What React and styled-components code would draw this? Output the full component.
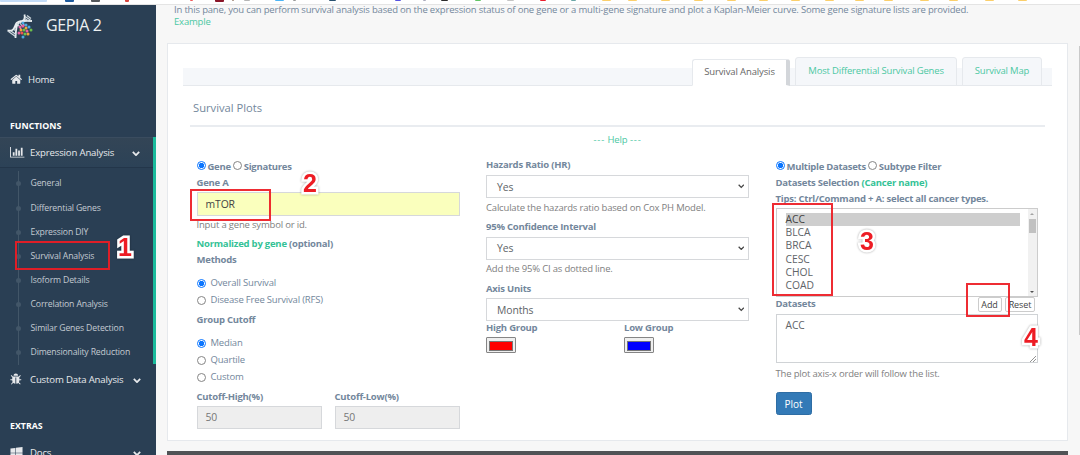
import React from 'react';
import styled, { createGlobalStyle, css } from 'styled-components';

const Global = createGlobalStyle`
  * { box-sizing: border-box; }
  body { margin: 0; background: #f7f7f7; overflow: hidden; }
  #root { font-family: "Open Sans", "Noto Sans", sans-serif; font-size: 9.5px; color: #73879c; }
`;

const Page = styled.div`
  position: relative; width: 1080px; height: 455px; overflow: hidden;
  display: flex; flex-direction: column; background: #f7f7f7;
`;

/* bookmark strip */
const Bookmarks = styled.div`
  flex: none; height: 5px; display: flex; align-items: flex-start; background: #fff;
  border-bottom: 1px solid #e4e4e4;
`;
const Mark = styled.i`
  flex: none; width: ${p => p.$w}px; height: ${p => p.$h || 1}px; margin-left: ${p => p.$gap}px;
  background: ${p => p.$c}; border-radius: 0 0 1px 1px;
`;
const marks = [
  [0, 47, '#c3dcf8', 2], [65, 9, '#1e5a9c', 2], [91, 9, '#55585c', 2], [125, 4, '#d8433c', 2], [190, 3, '#ee5a5a'],
  [215, 9, '#8a1528', 2], [232, 2, '#9b8070'], [244, 6, '#b5b5b5'], [275, 9, '#4cb4f5'], [293, 3, '#999'],
  [329, 7, '#28506e'], [395, 6, '#5552e0'], [423, 3, '#aab'], [441, 7, '#2a2a2a'], [475, 6, '#62c464'],
  [507, 7, '#c4c4c4'], [540, 6, '#ea1d2c'], [571, 5, '#6ba6a6'],
  ...[602, 628, 661, 694, 727, 759, 791, 825, 855, 884, 920, 949, 985, 1018].map(x => [x, 9, '#fbcf6b']),
];

const Body = styled.div`flex: 1; display: flex; min-height: 0;`;

/* sidebar */
const Sidebar = styled.aside`
  flex: none; width: 156px; background: #2a3f54; color: #e7e9ec; overflow: hidden;
`;
const Brand = styled.div`
  height: 50px; padding: 8px 0 0 6px; display: flex; align-items: flex-start; gap: 12px;
  font-size: 16px; line-height: 25px; color: #ecf0f1;
`;
const BrandName = styled.span`margin-left: 1px; letter-spacing: -.35px;`;
const NavRow = styled.div`
  height: ${p => p.$h}px; display: flex; align-items: center; padding-left: 10px;
  font-size: 9.6px; white-space: nowrap; letter-spacing: -.16px;
  ${p => p.$active && css`
    background: linear-gradient(#334556, #2c4257); border-bottom: 1px solid #23364a;
    border-top: 1px solid #3a4c5f;
  `}
`;
const IconSlot = styled.span`width: ${p => p.$w || 20}px; display: flex; flex: none; svg { display: block; }`;
const Caret = styled.span`margin-left: auto; margin-right: ${p => p.$r}px; display: flex; padding-top: ${p => p.$pt || 0}px;`;
const Heading = styled.div`
  height: ${p => p.$h}px; padding-left: 10px; padding-top: ${p => p.$pt}px;
  font-weight: 700; font-size: 8.8px; line-height: 12px; color: #fff;
`;
const ActiveGroup = styled.div`border-right: 3px solid #1abb9c; height: 227px;`;
const SubList = styled.div`padding-top: 3.4px;`;
const SubItem = styled.div`
  height: 24.15px; display: flex; align-items: center; padding-left: 18px; position: relative;
  font-size: 8.7px; color: #c3cad2; white-space: nowrap; letter-spacing: -.16px;
  &::before { content: ''; position: absolute; left: 18px; top: 0; bottom: 0; width: 1px; background: #425668; }
`;
const Dot = styled.i`
  width: 5px; height: 5px; border-radius: 50%; background: #425668; margin: 1px 9.5px 0 -2px; flex: none;
`;

/* main */
const Main = styled.main`flex: 1; padding: 0 11px; display: flex; flex-direction: column; min-width: 0;`;
const Intro = styled.div`
  height: 39.5px; padding: 0 0 0 7px; line-height: 12.5px; white-space: nowrap; margin-top: -1.5px; flex: none;
  letter-spacing: -.178px;
`;
const T = styled.span`color: ${p => p.$c || 'inherit'}; white-space: nowrap;`;
const Card = styled.section`
  flex: none; height: 398px; background: #fff; border: 1px solid #e6e9ed; padding: 12px 15px 0;
  width: 901px;
`;
const Tabs = styled.div`
  height: 30px; display: flex; justify-content: flex-end; align-items: flex-end; padding-right: 10px;
  background: linear-gradient(#fff 0 12px, #f5f7fa 12px); border-bottom: 1px solid #e6e9ed;
`;
const Tab = styled.div`
  width: ${p => p.$w}px; height: ${p => (p.$on ? 27 : 29)}px; margin-right: ${p => p.$mr || 0}px;
  margin-bottom: -1px; border: 1px solid #e6e9ed; border-radius: 3px 3px 0 0;
  display: flex; align-items: center; justify-content: center; padding-bottom: 2px;
  color: #4cc8a3; background: #f5f7fa; white-space: nowrap; letter-spacing: -.19px;
  ${p => p.$on && css`
    background: #fff; color: #666; border-right: 4px solid #d3d6da; border-bottom-color: #fff; letter-spacing: -.12px;
  `}
`;
const Title = styled.h2`
  margin: 0 7px; height: 41px; padding: 14px 0 0 3px; border-bottom: 2px solid #e9ecf0; font-weight: 400;
  font-size: 11.2px; line-height: 16px;
`;
const Help = styled.div`
  height: 28px; padding-top: 6px; line-height: 14px; text-align: center; color: #4cc8a3; letter-spacing: -.1px;
`;
const Dashes = styled.span`letter-spacing: .8px;`;
const Columns = styled.div`
  display: grid; grid-template-columns: 263px 263px 262px; column-gap: 26.5px; padding-left: 13.5px;
`;
const Col = styled.div`display: flex; flex-direction: column; min-width: 0; padding-top: ${p => p.$pt || 0}px;`;

const Line = styled.div`
  height: ${p => p.$h}px; display: flex; align-items: center; flex: none; white-space: nowrap;
  font-weight: ${p => (p.$b ? 700 : 400)}; letter-spacing: ${p => (p.$b ? -0.22 : -0.18)}px;
  color: ${p => p.$c || '#73879c'}; margin-bottom: ${p => p.$mb || 0}px; margin-top: ${p => p.$mt || 0}px;
`;
const RadioLine = styled(Line)`height: 16px; font-weight: 700; letter-spacing: -.27px;`;
const Radio = styled.i`
  width: 9px; height: 9px; border-radius: 50%; flex: none;
  margin: ${p => p.$mt || 0}px ${p => p.$mr || 5}px 0 ${p => p.$ml || 0}px;
  border: 1px solid ${p => (p.$on ? '#0a75ff' : '#858585')};
  background: ${p => (p.$on ? 'radial-gradient(#0a75ff 0 2.4px, #fff 3px)' : '#fff')};
`;
const Field = styled.div`
  height: ${p => p.$h || 23}px; width: 100%; flex: none;
  border: 1px solid #d6d8db; background: ${p => p.$bg || '#fff'}; color: ${p => p.$c || '#606468'};
  display: flex; align-items: center; padding: 0 6px 0 ${p => p.$pl || 8}px; font-size: 10.4px; letter-spacing: -.1px;
`;
const Pair = styled.div`display: grid; grid-template-columns: 125px 125px; column-gap: 13px; align-items: start;`;
const Swatch = styled.div`
  width: 30px; height: 16px; border: 1px solid #858585; border-radius: 1px; background: #efefef; padding: 3px 2px;
  &::before { content: ''; display: block; height: 8px; border: 1px solid #777; background: ${p => p.$c}; }
`;
const ListBox = styled.div`height: 89px; border: 1px solid #ccc; display: flex; flex: none; width: 262px; margin-top: 1.5px;`;
const Options = styled.div`flex: 1; padding: 4px 8px 0 9px; overflow: hidden;`;
const Option = styled.div`
  height: 13.2px; line-height: 13px; font-size: 10.3px; color: #606468;
  ${p => p.$on && css`background: #cecece; color: #444;`}
`;
const Scroll = styled.div`
  width: 9px; background: #f1f1f1; display: flex; flex-direction: column; align-items: center; justify-content: space-between;
`;
const Thumb = styled.i`width: 7px; height: 14px; background: #c1c1c1; margin-bottom: auto; margin-top: 1px;`;
const Arrow = styled.i`
  width: 0; height: 0; border: 2px solid transparent; margin: 3px 0;
  ${p => (p.$up ? css`border-bottom-color: #a3a3a3; margin-top: 2px;` : css`border-top-color: #505050; margin-bottom: 1px;`)}
`;
const SmallButton = styled.button`
  height: 15px; width: ${p => p.$w}px; border: 1px solid #ccc; border-radius: 2px; background: #fff; color: #444;
  font: 400 9px "Open Sans", sans-serif; padding: 0; margin-right: 3.5px; letter-spacing: -.1px;
`;
const TextArea = styled.div`
  height: 49px; border: 1px solid #d0d3d6; padding: 4px 1px 0 9px; font-size: 10.2px; line-height: 13px; color: #606468;
  display: flex; justify-content: space-between; flex: none;
  svg { align-self: flex-end; display: block; }
`;
const Plot = styled.button`
  width: 36px; height: 23px; border: 1px solid #2e6da4; border-radius: 2.5px; background: #337ab7; color: #fff;
  font: 400 10px "Open Sans", sans-serif; padding: 0;
`;
const Footer = styled.footer`margin-top: 10px; height: 10px; width: 901px; background: #505356; flex: none;`;

/* annotations that lie over the page */
const RedBox = styled.div`
  position: absolute; left: ${p => p.$x}px; top: ${p => p.$y}px; width: ${p => p.$w}px; height: ${p => p.$h}px;
  border: 2px solid #ed1c24; opacity: .93;
`;
const Num = styled.div`
  position: absolute; left: ${p => p.$x}px; top: ${p => p.$y}px; font: 700 25px/26px "Liberation Sans", sans-serif;
  color: #ed1c24; -webkit-text-stroke: 5px #fff; paint-order: stroke fill; stroke-linejoin: round;
  filter: drop-shadow(0 0 1px rgba(0,0,0,.35));
`;
const PageScroll = styled.div`position: absolute; right: 0; top: 46px; width: 1px; height: 289px; background: #c9c9c9;`;

const icons = {
  home: ['0 0 1792 1792', 'M1472 992v480q0 26-19 45t-45 19h-384v-384h-256v384h-384q-26 0-45-19t-19-45v-480q0-1 .5-3t.5-3l575-474 575 474q1 2 1 6zm223-69l-62 74q-8 9-21 11h-3q-13 0-21-7l-692-577-692 577q-12 8-24 7-13-2-21-11l-62-74q-8-10-7-23.5t11-21.5l719-599q32-26 76-26t76 26l244 204v-195q0-14 9-23t23-9h192q14 0 23 9t9 23v408l219 182q10 8 11 21.5t-7 23.5z'],
  chart: ['0 0 2048 1792', 'M640 896v512h-256v-512h256zm384-512v1024h-256v-1024h256zm1024 1152v128h-2048v-1536h128v1408h1920zm-640-896v768h-256v-768h256zm384-384v1152h-256v-1152h256z'],
  bug: ['0 0 1792 1792', 'M1632 960q0 26-19 45t-45 19h-224q0 171-67 290l208 209q19 19 19 45t-19 45q-18 19-45 19t-45-19l-198-197q-5 5-15 13t-42 28.5-65 36.5-82 29-97 13v-896h-128v896q-51 0-101.5-13.5t-87-33-66-39-43.5-32.5l-15-14-183 207q-20 21-48 21-24 0-43-16-19-18-20.5-44.5t15.5-46.5l202-227q-58-114-58-274h-224q-26 0-45-19t-19-45 19-45 45-19h224v-294l-173-173q-19-19-19-45t19-45 45-19 45 19l173 173h844l173-173q19-19 45-19t45 19 19 45-19 45l-173 173v294h224q26 0 45 19t19 45zm-480-576h-640q0-133 93.5-226.5t226.5-93.5 226.5 93.5 93.5 226.5z'],
  windows: ['0 0 1792 1792', 'M746 1006v651l-682-94v-557h682zm0-743v659h-682v-565zm982 743v786l-907-125v-661h907zm0-878v794h-907v-669z'],
};
const Icon = ({ name, w, h }) => (
  <svg width={w} height={h} viewBox={icons[name][0]} fill="#e7e9ec"><path d={icons[name][1]} /></svg>
);
const Chevron = ({ c = '#e7e9ec', w = 8, sw = 2.2 }) => (
  <svg width={w} height={w * 0.7} viewBox="0 0 10 7" fill="none" stroke={c} strokeWidth={sw}><path d="M1 1.2l4 4 4-4" /></svg>
);
const Logo = () => (
  <svg width="27" height="26" viewBox="0 0 27 26" fill="none">
    <path d="M1.500 17.500C8 19 8.500 14 10 11S16 7.500 26 8M18.500 1.500C20 8 16 8 13 9.500S10 17 9.500 25" stroke="#e8edf0" strokeWidth="1.800" />
    <path d="M2.500 18.500l7 5M5 18l5 3.500M8 16.500l2 1.500M11 10l4 6M13 9l4 5M15.500 8.500l3 4M19 3.500l6 4M18.500 5.500l5 3M21 2.500l4 3" stroke="#cfd8de" strokeWidth="1.200" />
    {[[17, 10, '#4aa8e0'], [20, 12, '#4aa8e0'], [14, 14, '#e85fa0'], [17, 13, '#e85fa0'], [20, 15, '#f2a33a'], [23, 14, '#4aa8e0'],
      [15, 17, '#f2a33a'], [18, 17, '#6cc04a'], [21, 18, '#e85fa0'], [25, 17, '#6cc04a'], [13, 20, '#e85fa0'], [16, 20, '#f0524f'],
      [19, 21, '#6cc04a'], [22, 21, '#f2a33a'], [17, 24, '#4aa8e0']].map(([x, y, c], i) => (
      <circle key={i} cx={x} cy={y} r="1.500" fill={c} />
    ))}
  </svg>
);

const subItems = ['General', 'Differential Genes', 'Expression DIY', 'Survival Analysis', 'Isoform Details',
  'Correlation Analysis', 'Similar Genes Detection', 'Dimensionality Reduction'];

const Select = ({ children }) => (
  <Field $pl={10}><span>{children}</span><Caret $r={-2}><Chevron c="#444" w={6.5} sw={1.9} /></Caret></Field>
);

export default function App() {
  return (
    <Page>
      <Global />
      <Bookmarks>
        {marks.map(([x, w, c, h], i) => (
          <Mark key={x} $w={w} $c={c} $h={h} $gap={i ? x - marks[i - 1][0] - marks[i - 1][1] : 0} />
        ))}
      </Bookmarks>
      <Body>
        <Sidebar>
          <Brand><Logo /><BrandName>GEPIA 2</BrandName></Brand>
          <NavRow $h={48}><IconSlot $w={18}><Icon name="home" w={12.5} h={12.5} /></IconSlot>Home</NavRow>
          <Heading $h={34} $pt={17}>FUNCTIONS</Heading>
          <ActiveGroup>
            <NavRow $h={31} $active><IconSlot><Icon name="chart" w={14.5} h={12.5} /></IconSlot>Expression Analysis<Caret $r={13} $pt={2}><Chevron /></Caret></NavRow>
            <SubList>{subItems.map(s => <SubItem key={s}><Dot />{s}</SubItem>)}</SubList>
          </ActiveGroup>
          <NavRow $h={31}><IconSlot><Icon name="bug" w={12.5} h={12.5} /></IconSlot>Custom Data Analysis<Caret $r={15} $pt={2}><Chevron /></Caret></NavRow>
          <Heading $h={42} $pt={25}>EXTRAS</Heading>
          <NavRow $h={31}><IconSlot><Icon name="windows" w={13} h={13} /></IconSlot>Docs<Caret $r={15} $pt={2}><Chevron /></Caret></NavRow>
        </Sidebar>
        <Main>
          <Intro>
            <T>In this pane, you can perform survival analysis based on the expression status of one gene or a multi-gene signature and plot a Kaplan-Meier curve. Some gene signature lists are provided.</T><br />
            <T $c="#4cc8a3">Example</T>
          </Intro>
          <Card>
            <Tabs>
              <Tab $on $w={98} $mr={5}>Survival Analysis</Tab>
              <Tab $w={162} $mr={5}>Most Differential Survival Genes</Tab>
              <Tab $w={80}>Survival Map</Tab>
            </Tabs>
            <Title>Survival Plots</Title>
            <Help><Dashes>---</Dashes> Help <Dashes>---</Dashes></Help>
            <Columns>
              <Col $pt={3.5}>
                <RadioLine><Radio $on $mr={2} $mt={-2} />Gene<Radio $ml={2} $mr={2} $mt={-2} />Signatures</RadioLine>
                <Line $h={16} $b $mb={1.5}>Gene A</Line>
                <Field $h={23.5} $bg="#faffbd" $c="#444" $pl={8}>mTOR</Field>
                <Line $h={18} $c="#808080">Input a gene symbol or id.</Line>
                <Line $h={19} $b><T $c="#34c296">Normalized by gene</T>&nbsp;(optional)</Line>
                <Line $h={14} $b $mb={7.5}>Methods</Line>
                <Line $h={17}><Radio $on $mt={1} />Overall Survival</Line>
                <Line $h={17}><Radio $mt={1} />Disease Free Survival (RFS)</Line>
                <Line $h={17} $b $mt={3} $mb={6}>Group Cutoff</Line>
                <Line $h={17}><Radio $on $mt={1} />Median</Line>
                <Line $h={17}><Radio $mt={1} />Quartile</Line>
                <Line $h={17}><Radio $mt={1} />Custom</Line>
                <Pair>
                  <div><Line $h={18} $mt={2.5} $b>Cutoff-High(%)</Line><Field $h={23.5} $bg="#eee" $c="#777">50</Field></div>
                  <div><Line $h={18} $mt={2.5} $b>Cutoff-Low(%)</Line><Field $h={23.5} $bg="#eee" $c="#777">50</Field></div>
                </Pair>
              </Col>
              <Col $pt={1}>
                <Line $h={17.5} $mb={1.5} $b>Hazards Ratio (HR)</Line>
                <Select>Yes</Select>
                <Line $h={18.5} $c="#808080">Calculate the hazards ratio based on Cox PH Model.</Line>
                <Line $h={20} $b>95% Confidence Interval</Line>
                <Select>Yes</Select>
                <Line $h={18.5} $c="#808080">Add the 95% CI as dotted line.</Line>
                <Line $h={20} $b>Axis Units</Line>
                <Select>Months</Select>
                <Pair>
                  <div><Line $h={13} $mb={3} $b>High Group</Line><Swatch $c="#f00" /></div>
                  <div><Line $h={13} $mb={3} $b>Low Group</Line><Swatch $c="#00f" /></div>
                </Pair>
              </Col>
              <Col $pt={3.5}>
                <RadioLine><Radio $on $mr={2} $mt={-2} />Multiple Datasets<Radio $ml={2} $mr={2} $mt={-2} />Subtype Filter</RadioLine>
                <Line $h={16} $b>Datasets Selection&nbsp;<T $c="#34c296">(Cancer name)</T></Line>
                <Line $h={16} $b>Tips: Ctrl/Command + A: select all cancer types.</Line>
                <ListBox>
                  <Options>{['ACC', 'BLCA', 'BRCA', 'CESC', 'CHOL', 'COAD'].map((o, i) => <Option key={o} $on={i === 0}>{o}</Option>)}</Options>
                  <Scroll><Arrow $up /><Thumb /><Arrow /></Scroll>
                </ListBox>
                <Line $h={12} $mb={5} $b>
                  <T>Datasets</T>
                  <Caret $r={-1} $pt={2.5}><SmallButton $w={24}>Add</SmallButton><SmallButton $w={30}>Reset</SmallButton></Caret>
                </Line>
                <TextArea>ACC<svg width="6" height="6" viewBox="0 0 6 6" stroke="#777" strokeWidth=".8"><path d="M0 6L6 0M3 6l3-3" /></svg></TextArea>
                <Line $h={20} $c="#808080">The plot axis-x order will follow the list.</Line>
                <Line $h={41}><Plot>Plot</Plot></Line>
              </Col>
            </Columns>
          </Card>
          <Footer />
        </Main>
      </Body>
      <RedBox $x={15} $y={241} $w={95} $h={29} />
      <RedBox $x={190} $y={189} $w={81} $h={32} />
      <RedBox $x={772} $y={203} $w={61} $h={93} />
      <RedBox $x={966} $y={283} $w={44} $h={34} />
      <Num $x={118} $y={234}>1</Num>
      <Num $x={303} $y={170}>2</Num>
      <Num $x={860} $y={228}>3</Num>
      <Num $x={1024} $y={324}>4</Num>
      <PageScroll />
    </Page>
  );
}
